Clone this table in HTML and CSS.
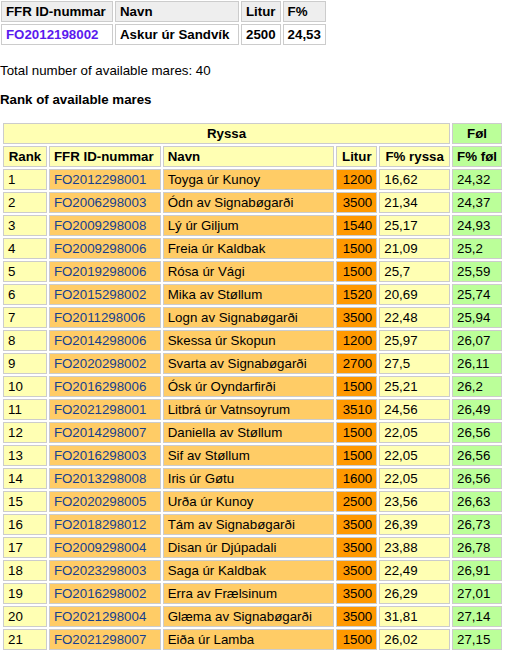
FILE: index.html
```html
<!DOCTYPE html>
<html>
<head>
<meta charset="utf-8">
<link rel="stylesheet" href="styles.css">
</head>
<body>
<table class="info">
  <tr><th class="i1">FFR ID-nummar</th><th class="i2">Navn</th><th class="i3">Litur</th><th class="i4">F%</th></tr>
  <tr><td><a class="vlink" href="#">FO2012198002</a></td><td>Askur úr Sandvík</td><td>2500</td><td>24,53</td></tr>
</table>
<p class="total">Total number of available mares: 40</p>
<h4 class="title">Rank of available mares</h4>
<table class="rank">
  <tr><th class="y" colspan="5">Ryssa</th><th class="g">Føl</th></tr>
  <tr><th class="y c1">Rank</th><th class="y l c2">FFR ID-nummar</th><th class="y l c3">Navn</th><th class="y c4">Litur</th><th class="y c5">F% ryssa</th><th class="g c6">F% føl</th></tr>
  <tr><td class="y">1</td><td class="o"><a href="#">FO2012298001</a></td><td class="o">Toyga úr Kunoy</td><td class="d">1200</td><td class="y">16,62</td><td class="g">24,32</td></tr>
  <tr><td class="y">2</td><td class="o"><a href="#">FO2006298003</a></td><td class="o">Ódn av Signabøgarði</td><td class="d">3500</td><td class="y">21,34</td><td class="g">24,37</td></tr>
  <tr><td class="y">3</td><td class="o"><a href="#">FO2009298008</a></td><td class="o">Lý úr Giljum</td><td class="d">1540</td><td class="y">25,17</td><td class="g">24,93</td></tr>
  <tr><td class="y">4</td><td class="o"><a href="#">FO2009298006</a></td><td class="o">Freia úr Kaldbak</td><td class="d">1500</td><td class="y">21,09</td><td class="g">25,2</td></tr>
  <tr><td class="y">5</td><td class="o"><a href="#">FO2019298006</a></td><td class="o">Rósa úr Vági</td><td class="d">1500</td><td class="y">25,7</td><td class="g">25,59</td></tr>
  <tr><td class="y">6</td><td class="o"><a href="#">FO2015298002</a></td><td class="o">Mika av Støllum</td><td class="d">1520</td><td class="y">20,69</td><td class="g">25,74</td></tr>
  <tr><td class="y">7</td><td class="o"><a href="#">FO2011298006</a></td><td class="o">Logn av Signabøgarði</td><td class="d">3500</td><td class="y">22,48</td><td class="g">25,94</td></tr>
  <tr><td class="y">8</td><td class="o"><a href="#">FO2014298006</a></td><td class="o">Skessa úr Skopun</td><td class="d">1200</td><td class="y">25,97</td><td class="g">26,07</td></tr>
  <tr><td class="y">9</td><td class="o"><a href="#">FO2020298002</a></td><td class="o">Svarta av Signabøgarði</td><td class="d">2700</td><td class="y">27,5</td><td class="g">26,11</td></tr>
  <tr><td class="y">10</td><td class="o"><a href="#">FO2016298006</a></td><td class="o">Ósk úr Oyndarfirði</td><td class="d">1500</td><td class="y">25,21</td><td class="g">26,2</td></tr>
  <tr><td class="y">11</td><td class="o"><a href="#">FO2021298001</a></td><td class="o">Litbrá úr Vatnsoyrum</td><td class="d">3510</td><td class="y">24,56</td><td class="g">26,49</td></tr>
  <tr><td class="y">12</td><td class="o"><a href="#">FO2014298007</a></td><td class="o">Daniella av Støllum</td><td class="d">1500</td><td class="y">22,05</td><td class="g">26,56</td></tr>
  <tr><td class="y">13</td><td class="o"><a href="#">FO2016298003</a></td><td class="o">Sif av Støllum</td><td class="d">1500</td><td class="y">22,05</td><td class="g">26,56</td></tr>
  <tr><td class="y">14</td><td class="o"><a href="#">FO2013298008</a></td><td class="o">Iris úr Gøtu</td><td class="d">1600</td><td class="y">22,05</td><td class="g">26,56</td></tr>
  <tr><td class="y">15</td><td class="o"><a href="#">FO2020298005</a></td><td class="o">Urða úr Kunoy</td><td class="d">2500</td><td class="y">23,56</td><td class="g">26,63</td></tr>
  <tr><td class="y">16</td><td class="o"><a href="#">FO2018298012</a></td><td class="o">Tám av Signabøgarði</td><td class="d">3500</td><td class="y">26,39</td><td class="g">26,73</td></tr>
  <tr><td class="y">17</td><td class="o"><a href="#">FO2009298004</a></td><td class="o">Disan úr Djúpadali</td><td class="d">3500</td><td class="y">23,88</td><td class="g">26,78</td></tr>
  <tr><td class="y">18</td><td class="o"><a href="#">FO2023298003</a></td><td class="o">Saga úr Kaldbak</td><td class="d">3500</td><td class="y">22,49</td><td class="g">26,91</td></tr>
  <tr><td class="y">19</td><td class="o"><a href="#">FO2016298002</a></td><td class="o">Erra av Frælsinum</td><td class="d">3500</td><td class="y">26,29</td><td class="g">27,01</td></tr>
  <tr><td class="y">20</td><td class="o"><a href="#">FO2021298004</a></td><td class="o">Glæma av Signabøgarði</td><td class="d">3500</td><td class="y">31,81</td><td class="g">27,14</td></tr>
  <tr><td class="y">21</td><td class="o"><a href="#">FO2021298007</a></td><td class="o">Eiða úr Lamba</td><td class="d">1500</td><td class="y">26,02</td><td class="g">27,15</td></tr>
</table>
</body>
</html>
```

FILE: styles.css
```css
html, body {
  margin: 0;
  padding: 0;
  background: #ffffff;
}
body {
  font-family: "Liberation Sans", Arial, sans-serif;
  font-size: 13.3px;
  color: #000000;
  line-height: 15px;
}
table {
  border-collapse: separate;
  border-spacing: 2px;
}
th, td {
  box-sizing: border-box;
  border: 1px solid #cccccc;
  padding: 2px 4px;
  white-space: nowrap;
  text-align: left;
  font-size: 13.3px;
  line-height: 15px;
}
.info {
  margin: -1px 0 0 -1px;
}
.info th {
  background: #eeeeee;
  font-weight: bold;
}
.info td {
  background: #ffffff;
  font-weight: bold;
}
.i1 { width: 112px; }
.i2 { width: 124px; }
.i3 { width: 39px; }
.i4 { width: 43px; }
.vlink {
  color: #5a1aee;
  text-decoration: none;
}
.total {
  margin: 16px 0 0 0;
}
.title {
  margin: 14px 0 0 0;
  font-size: 13.3px;
  font-weight: bold;
}
.rank {
  margin: 14px 0 0 1px;
  width: 503px;
}
.rank th {
  font-weight: bold;
  text-align: center;
}
.rank th.l {
  text-align: left;
}
.c1 { width: 44px; }
.c2 { width: 112px; }
.c3 { width: 173px; }
.c4 { width: 41px; }
.c5 { width: 71px; }
.c6 { width: 48px; }
.rank a {
  color: #153f8f;
  text-decoration: none;
}
.y { background: #ffffb3; }
.g { background: #bbff99; }
.o { background: #ffcc66; }
.d { background: #ff9900; }
.rank td.d { text-align: right; }
```
